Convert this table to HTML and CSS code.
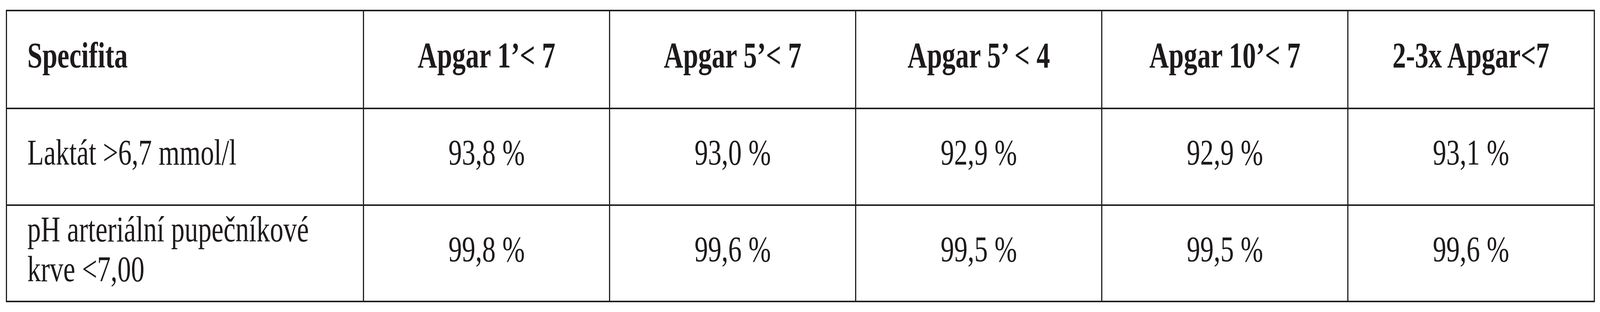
FILE: index.html
```html
<!DOCTYPE html>
<html lang="cs">
<head>
<meta charset="utf-8">
<title>Specifita</title>
<link rel="stylesheet" href="styles.css">
</head>
<body>
<table class="spec">
  <colgroup>
    <col class="c-label">
    <col class="c-val">
    <col class="c-val">
    <col class="c-val">
    <col class="c-val">
    <col class="c-val">
  </colgroup>
  <thead>
    <tr class="r-head">
      <th class="label"><span class="t">Specifita</span></th>
      <th><span class="t">Apgar 1’&lt; 7</span></th>
      <th><span class="t">Apgar 5’&lt; 7</span></th>
      <th><span class="t">Apgar 5’ &lt; 4</span></th>
      <th><span class="t">Apgar 10’&lt; 7</span></th>
      <th><span class="t">2-3x Apgar&lt;7</span></th>
    </tr>
  </thead>
  <tbody>
    <tr class="r-one">
      <td class="label"><span class="t">Laktát &gt;6,7 mmol/l</span></td>
      <td><span class="t">93,8 %</span></td>
      <td><span class="t">93,0 %</span></td>
      <td><span class="t">92,9 %</span></td>
      <td><span class="t">92,9 %</span></td>
      <td><span class="t">93,1 %</span></td>
    </tr>
    <tr class="r-two">
      <td class="label"><span class="t">pH arteriální pupečníkové<br>krve &lt;7,00</span></td>
      <td><span class="t">99,8 %</span></td>
      <td><span class="t">99,6 %</span></td>
      <td><span class="t">99,5 %</span></td>
      <td><span class="t">99,5 %</span></td>
      <td><span class="t">99,6 %</span></td>
    </tr>
  </tbody>
</table>
</body>
</html>
```

FILE: styles.css
```css
:root {
  /* horizontal scale of the 5518px-wide design to the actual viewport */
  --u: calc(100vw / 5518);
  --sx: 0.7423;
  --ink: #231f20;
}

html, body {
  margin: 0;
  padding: 0;
  background: #ffffff;
}

body {
  height: 800px;
  overflow: hidden;
  padding-top: 25px;
  box-sizing: border-box;
  font-family: "Liberation Serif", "Times New Roman", serif;
  color: #1e1a1b;
}

.spec {
  width: calc(5480 * var(--u));
  margin-left: calc(20 * var(--u));
  border-collapse: collapse;
  table-layout: fixed;
  border-style: solid;
  border-color: var(--ink);
  border-width: 4px 3px;
  font-size: 93px;
  line-height: 102px;
}

.c-label { width: 22.49%; }
.c-val { width: 15.502%; }

.spec th,
.spec td {
  border-style: solid;
  border-color: var(--ink);
  border-width: 4px 3px;
  text-align: center;
  vertical-align: middle;
  padding: 0 0 22px 0;
  white-space: nowrap;
}

.spec th {
  font-weight: bold;
}

.t {
  display: inline-block;
  transform: scaleX(var(--sx));
  transform-origin: 50% 50%;
}

.spec .label {
  text-align: left;
  padding-left: calc(70 * var(--u));
}

.spec .label .t {
  transform-origin: 0 50%;
}

.r-head { height: 251px; }
.r-one { height: 248px; }
.r-two { height: 247px; }
```
